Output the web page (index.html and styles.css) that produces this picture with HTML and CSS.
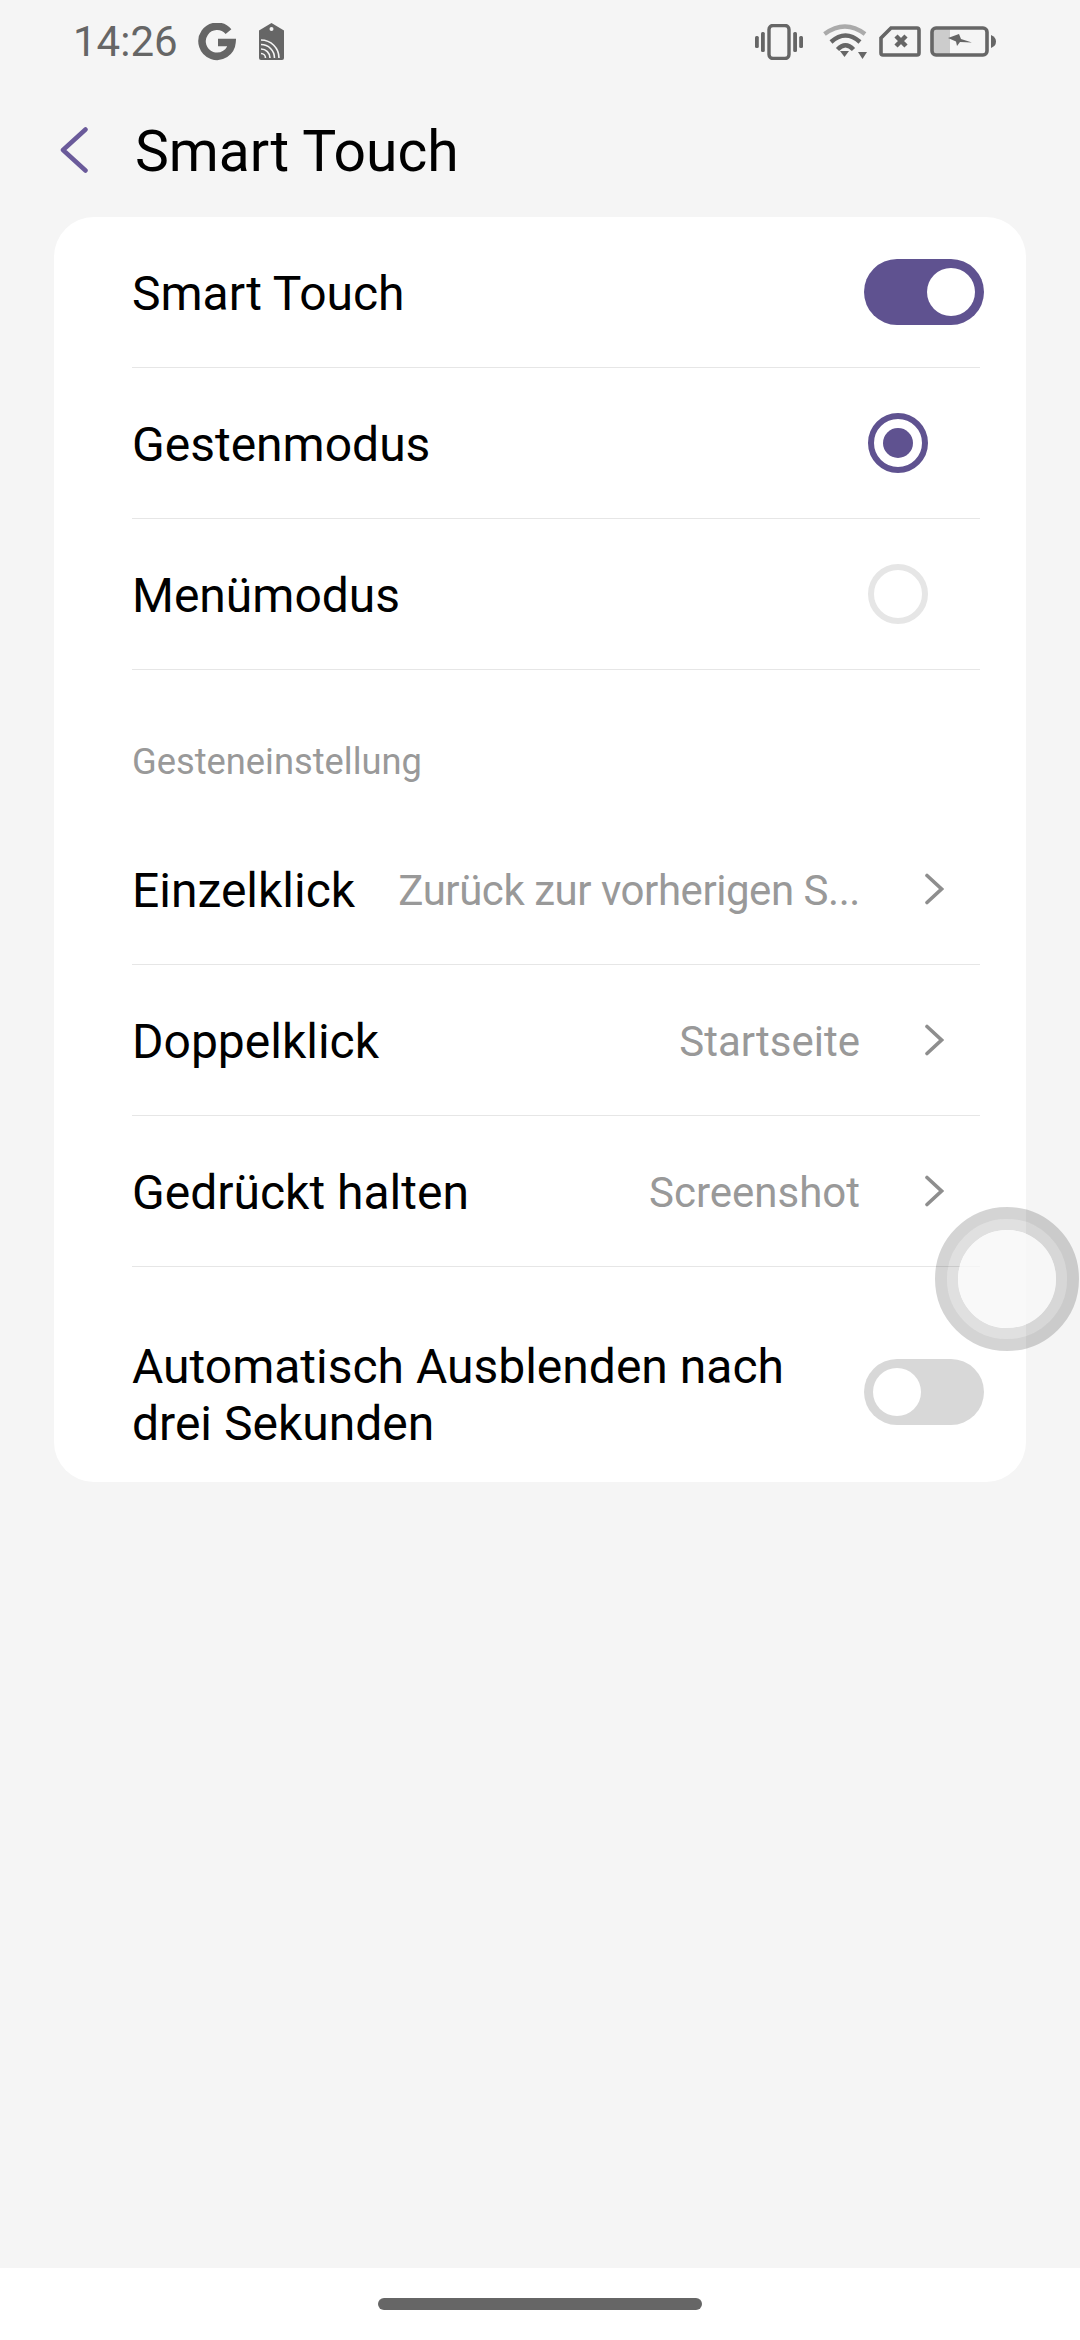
FILE: index.html
```html
<!DOCTYPE html>
<html lang="de">
<head>
    <meta charset="UTF-8">
    <meta name="viewport" content="width=device-width, initial-scale=1.0">
    <title>Smart Touch</title>
    <link rel="stylesheet" href="styles.css">
</head>
<body>
    <div class="status-bar">
        <span class="time">14:26</span>
        <svg class="ico-g" width="38" height="38" viewBox="0 0 38 38"><path d="M30.500 8.600A15 15 0 1 0 34 19.500H20" fill="none" stroke="#666" stroke-width="7.500"/></svg>
        <svg class="ico-tag" width="25" height="37" viewBox="0 0 25 37"><path d="M0 7.500 12.500 0 25 7.500V35a2 2 0 0 1-2 2H2a2 2 0 0 1-2-2Z" fill="#666"/><circle cx="12.500" cy="6" r="2" fill="#f5f5f5"/><g fill="none" stroke="#f5f5f5" stroke-width="1.600"><path d="M2 17A18 18 0 0 1 20 35"/><path d="M2 21.500A13.500 13.500 0 0 1 15.500 35"/><path d="M2 26A9 9 0 0 1 11 35"/><path d="M2 30.500A4.500 4.500 0 0 1 6.500 35"/></g></svg>
        <span class="spacer"></span>
        <svg class="ico-vib" width="48" height="36" viewBox="0 0 48 36"><rect x="14" y="1.500" width="20" height="33" rx="4" fill="none" stroke="#666" stroke-width="3.400"/><g fill="#666"><rect x="0" y="12" width="3.800" height="12" rx="1.500"/><rect x="6" y="8" width="3.800" height="20" rx="1.500"/><rect x="38.200" y="8" width="3.800" height="20" rx="1.500"/><rect x="44.200" y="12" width="3.800" height="12" rx="1.500"/></g></svg>
        <svg class="ico-wifi" width="45" height="35" viewBox="0 0 45 35"><g fill="none" stroke-width="4.400"><path d="M1.500 10Q22 -5 42 10" stroke="#aaa"/><path d="M8 18Q22.500 5 37 18" stroke="#666"/><path d="M14.500 25.500Q22.500 17 30.500 25.500" stroke="#666"/></g><path d="M17 27H26L21.500 33Z" fill="#666"/><path d="M35 28H44L39.500 35Z" fill="#666"/></svg>
        <svg class="ico-sim" width="42" height="31" viewBox="0 0 42 31"><path d="M12 2H38Q40 2 40 4V27Q40 29 38 29H4Q2 29 2 27V12Z" fill="none" stroke="#666" stroke-width="3.600"/><path d="M17 10 27 20M27 10 17 20" stroke="#666" stroke-width="4.500"/></svg>
        <svg class="ico-bat" width="66" height="31" viewBox="0 0 66 31"><rect x="3" y="3" width="17" height="25" fill="#ccc"/><rect x="2" y="2" width="55" height="27" rx="4" fill="none" stroke="#666" stroke-width="3.600"/><path d="M61 9Q66 11 66 15.500T61 22Z" fill="#666"/><path d="M18 12 29 8 31 13 42 16.500 30 16 27 20 26 15.500Z" fill="#666"/></svg>
    </div>

    <div class="header">
        <svg class="back" width="28" height="46" viewBox="0 0 28 46"><path d="M25.500 2.500 3 23 25.500 43.500" fill="none" stroke="#6a5a9a" stroke-width="4.500" stroke-linecap="round" stroke-linejoin="round"/></svg>
        <h1>Smart Touch</h1>
    </div>

    <div class="card">
        <div class="row">
            <span class="label">Smart Touch</span>
            <span class="toggle on"></span>
        </div>
        <div class="row">
            <span class="label">Gestenmodus</span>
            <span class="radio on"></span>
        </div>
        <div class="row">
            <span class="label">Menümodus</span>
            <span class="radio"></span>
        </div>
        <div class="section">Gesteneinstellung</div>
        <div class="row">
            <span class="label">Einzelklick</span>
            <span class="value tight">Zurück zur vorherigen S...</span>
            <svg class="chev" width="20" height="32" viewBox="0 0 20 32"><path d="M3 2.500 17.500 16 3 29.500" fill="none" stroke="#8e8e8e" stroke-width="3.600" stroke-linecap="round"/></svg>
        </div>
        <div class="row">
            <span class="label">Doppelklick</span>
            <span class="value">Startseite</span>
            <svg class="chev" width="20" height="32" viewBox="0 0 20 32"><path d="M3 2.500 17.500 16 3 29.500" fill="none" stroke="#8e8e8e" stroke-width="3.600" stroke-linecap="round"/></svg>
        </div>
        <div class="row">
            <span class="label">Gedrückt halten</span>
            <span class="value">Screenshot</span>
            <svg class="chev" width="20" height="32" viewBox="0 0 20 32"><path d="M3 2.500 17.500 16 3 29.500" fill="none" stroke="#8e8e8e" stroke-width="3.600" stroke-linecap="round"/></svg>
        </div>
        <div class="row last">
            <span class="label wrap">Automatisch Ausblenden nach drei Sekunden</span>
            <span class="toggle"></span>
        </div>
    </div>

    <div class="nav-bar"><span class="home-pill"></span></div>

    <div class="float-btn"><span class="float-mid"><span class="float-inner"></span></span></div>
</body>
</html>
```

FILE: styles.css
```css
* {
    box-sizing: border-box;
}
body {
    margin: 0;
    width: 1080px;
    height: 2340px;
    position: relative;
    overflow: hidden;
    display: flex;
    flex-direction: column;
    background-color: #f5f5f5;
    font-family: Roboto, sans-serif;
    color: #000;
}
.status-bar {
    height: 80px;
    padding: 3px 84px 0 73px;
    display: flex;
    align-items: center;
    color: #666;
}
.time {
    font-size: 42px;
    width: 125px;
}
.ico-g {
    margin-right: 23px;
}
.spacer {
    flex: 1;
}
.ico-vib {
    margin-right: 20px;
}
.ico-wifi {
    margin-right: 11px;
}
.ico-sim {
    margin-right: 9px;
}
.header {
    height: 137px;
    padding: 2px 0 0 60px;
    display: flex;
    align-items: center;
}
.header h1 {
    margin: 3px 0 0 47px;
    font-size: 57px;
    font-weight: 400;
}
.card {
    margin: 0 54px;
    padding-left: 78px;
    height: 1265px;
    background-color: #fff;
    border-radius: 40px;
}
.row {
    height: 151px;
    margin-right: 46px;
    display: flex;
    align-items: center;
    border-bottom: 1.5px solid #e6e6e6;
}
.row.last {
    height: 216px;
    padding: 72px 0 32px;
    border-bottom: none;
}
.label {
    padding-top: 2px;
    font-size: 48px;
    white-space: nowrap;
    flex: none;
}
.label.wrap {
    padding-top: 0;
    width: 700px;
    white-space: normal;
    line-height: 57px;
}
.value {
    flex: 1;
    padding-top: 2px;
    font-size: 42px;
    color: #999;
    text-align: right;
    white-space: nowrap;
}
.value.tight {
    letter-spacing: -0.45px;
}
.chev {
    flex: none;
    margin: 0 36px 0 64px;
}
.toggle {
    flex: none;
    width: 120px;
    height: 66px;
    margin: 0 -4px 0 auto;
    padding: 9px;
    border-radius: 33px;
    background-color: #d8d8d8;
    display: flex;
}
.toggle::after {
    content: "";
    width: 48px;
    height: 48px;
    border-radius: 50%;
    background-color: #fff;
}
.toggle.on {
    background-color: #5f5290;
    justify-content: flex-end;
}
.row.last .toggle {
    margin-bottom: 6px;
}
.radio {
    flex: none;
    width: 60px;
    height: 60px;
    margin: 0 52px 0 auto;
    border: 6px solid #e6e6e6;
    border-radius: 50%;
    display: flex;
    align-items: center;
    justify-content: center;
}
.radio.on {
    border-color: #5f5290;
}
.radio.on::after {
    content: "";
    width: 30px;
    height: 30px;
    border-radius: 50%;
    background-color: #5f5290;
}
.section {
    height: 144px;
    padding-top: 72px;
    font-size: 36.3px;
    line-height: 40px;
    color: #999;
}
.nav-bar {
    margin-top: auto;
    height: 72px;
    background-color: #fff;
    display: flex;
    justify-content: center;
    padding-top: 30px;
}
.home-pill {
    width: 324px;
    height: 12px;
    border-radius: 6px;
    background-color: #666;
}
/* floating assistive button, sits over the card edge */
.float-btn {
    position: absolute;
    left: 935px;
    top: 1207px;
    width: 144px;
    height: 144px;
    border: 12px solid rgba(0, 0, 0, 0.17);
    border-radius: 50%;
}
.float-mid {
    display: block;
    width: 120px;
    height: 120px;
    border: 11px solid rgba(0, 0, 0, 0.12);
    border-radius: 50%;
}
.float-inner {
    display: block;
    width: 98px;
    height: 98px;
    border-radius: 50%;
    background-color: rgba(248, 248, 248, 0.8);
}
```
